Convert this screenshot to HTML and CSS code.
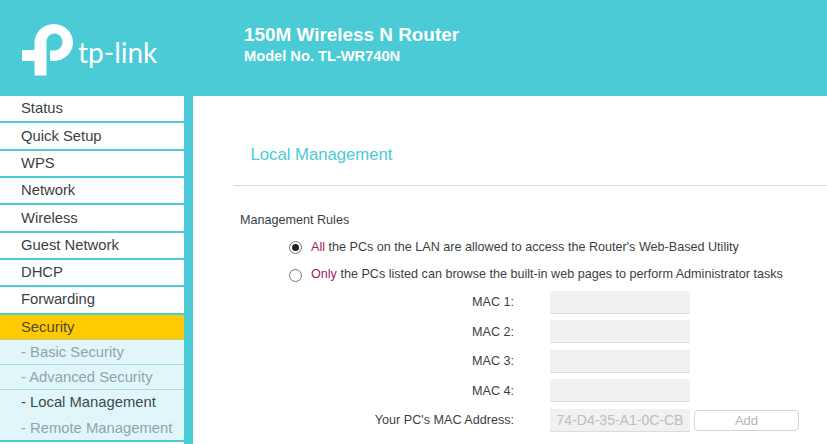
FILE: index.html
```html
<!DOCTYPE html>
<html>
<head>
  <title>TL-WR740N</title>
  <link rel="stylesheet" href="styles.css">
</head>
<body>
  <div id="topbar">
    <div id="logo">
      <svg width="52" height="54" viewBox="0 0 52 54">
        <path fill="#fff" d="M12.500 27V20C12.500 9.500 21 1 32 1C42.500 1 51 9.500 51 19.500C51 29.500 42.500 38 32 38H28V27.500H32.500C37 27.500 40.500 23.500 40.500 19C40.500 14.500 37 10.500 32.500 10.500C28 10.500 24.500 14.500 24.500 19V52.500H12.500V38H0V27Z"/>
      </svg>
      <span id="logoText">tp-link</span>
    </div>
    <div id="model">
      <h1>150M Wireless N Router</h1>
      <p>Model No. TL-WR740N</p>
    </div>
  </div>
  <div id="page">
    <ul id="menu">
      <li>Status</li>
      <li>Quick Setup</li>
      <li>WPS</li>
      <li>Network</li>
      <li>Wireless</li>
      <li>Guest Network</li>
      <li>DHCP</li>
      <li>Forwarding</li>
      <li class="active">Security</li>
      <li class="sub">- Basic Security</li>
      <li class="sub">- Advanced Security</li>
      <li class="sub current">- Local Management</li>
      <li class="sub last">- Remote Management</li>
      <li class="tail"></li>
    </ul>
    <div id="content">
      <h2>Local Management</h2>
      <div class="section">
        <div class="rules-title">Management Rules</div>
        <div class="rule">
          <span class="radio checked"></span>
          <span><span class="hl">All</span> the PCs on the LAN are allowed to access the Router's Web-Based Utility</span>
        </div>
        <div class="rule">
          <span class="radio"></span>
          <span><span class="hl">Only</span> the PCs listed can browse the built-in web pages to perform Administrator tasks</span>
        </div>
        <div class="mac-form">
          <label>MAC 1:</label><div class="field"></div><div></div>
          <label>MAC 2:</label><div class="field"></div><div></div>
          <label>MAC 3:</label><div class="field"></div><div></div>
          <label>MAC 4:</label><div class="field"></div><div></div>
          <label>Your PC's MAC Address:</label><div class="field">74-D4-35-A1-0C-CB</div><div class="add-button">Add</div>
        </div>
      </div>
    </div>
  </div>
</body>
</html>
```

FILE: styles.css
```css
html, body {
  height: 100%;
  margin: 0;
  padding: 0;
  overflow: hidden;
}

body {
  font-family: "Liberation Sans", Arial, sans-serif;
  color: #3b3f44;
  background-color: #fff;
}

#topbar {
  height: 96px;
  background-color: #4acbd6;
  display: flex;
  color: #fff;
}

#logo {
  width: 244px;
  padding: 23px 0 0 22px;
  box-sizing: border-box;
  display: flex;
  align-items: flex-start;
}

#logoText {
  font-family: Lato, sans-serif;
  font-weight: 400;
  font-size: 28px;
  line-height: 30px;
  margin: 14px 0 0 4px;
}

#model {
  padding-top: 24px;
}

#model h1 {
  margin: 0;
  font-size: 18.9px;
  line-height: 22px;
}

#model p {
  margin: 0;
  font-size: 14.65px;
  line-height: 20px;
  font-weight: bold;
}

#page {
  display: flex;
  height: 348px;
}

#menu {
  list-style: none;
  margin: 0;
  padding: 0 9px 0 0;
  width: 184px;
  flex-shrink: 0;
  background-color: #4acbd6;
}

#menu li {
  height: 25.03px;
  padding-top: 0.3px;
  line-height: 25px;
  margin-bottom: 2px;
  padding-left: 21px;
  font-size: 14.8px;
  background-color: #fff;
}

#menu li.active {
  background-color: #ffcb00;
  height: 24px;
  padding-top: 0;
  line-height: 24.5px;
  margin-bottom: 0;
  color: #50493a;
  border-bottom: 1px solid #b9cf8c;
}

#menu li.sub {
  height: 24px;
  padding-top: 0;
  margin-bottom: 0;
  line-height: 24px;
  background-color: #e1f6f9;
  color: #8ea5ad;
  border-bottom: 1px solid #a5dfe5;
}

#menu li.current {
  color: #3b4a50;
  border-bottom: none;
  height: 25px;
}

#menu li.last {
  height: 25px;
  line-height: 26px;
  border-bottom: 2px solid #4acbd6;
}

#menu li.tail {
  height: 2px;
  padding-top: 0;
  margin-bottom: 0;
}

#content {
  flex-grow: 1;
  padding-left: 41px;
}

#content h2 {
  margin: 0;
  padding: 48px 0 20px 16.500px;
  font-size: 16.7px;
  line-height: 21px;
  font-weight: normal;
  color: #4acbd6;
  border-bottom: 1px solid #d9d9d9;
}

.section {
  padding: 27px 0 0 6px;
  font-size: 12.6px;
}

.rules-title {
  line-height: 15px;
}

.rule {
  display: flex;
  align-items: center;
  height: 27.5px;
  margin-left: 49px;
  gap: 9px;
}

.rules-title + .rule {
  margin-top: 5px;
}

.radio {
  width: 11px;
  height: 11px;
  border: 1px solid #767676;
  border-radius: 50%;
  flex-shrink: 0;
  position: relative;
  top: 1px;
}

.radio.checked::after {
  content: "";
  display: block;
  width: 7px;
  height: 7px;
  margin: 2px;
  border-radius: 50%;
  background-color: #222;
}

.hl {
  color: #a5195f;
}

.mac-form {
  display: grid;
  grid-template-columns: 274px 176px 109px;
  row-gap: 6.5px;
  align-items: center;
  margin-top: 2.500px;
}

.mac-form label {
  text-align: right;
}

.field {
  height: 22px;
  line-height: 23px;
  margin-left: 36px;
  background-color: #f1f1f1;
  border-bottom: 1px solid #dcdcdc;
  color: #bdbdbd;
  text-align: center;
  font-size: 14px;
  white-space: nowrap;
}

.add-button {
  height: 19px;
  line-height: 19px;
  margin-left: 4px;
  border: 1px solid #d5d5d5;
  border-radius: 4px;
  color: #b5b5b5;
  text-align: center;
  font-size: 13px;
}
```
